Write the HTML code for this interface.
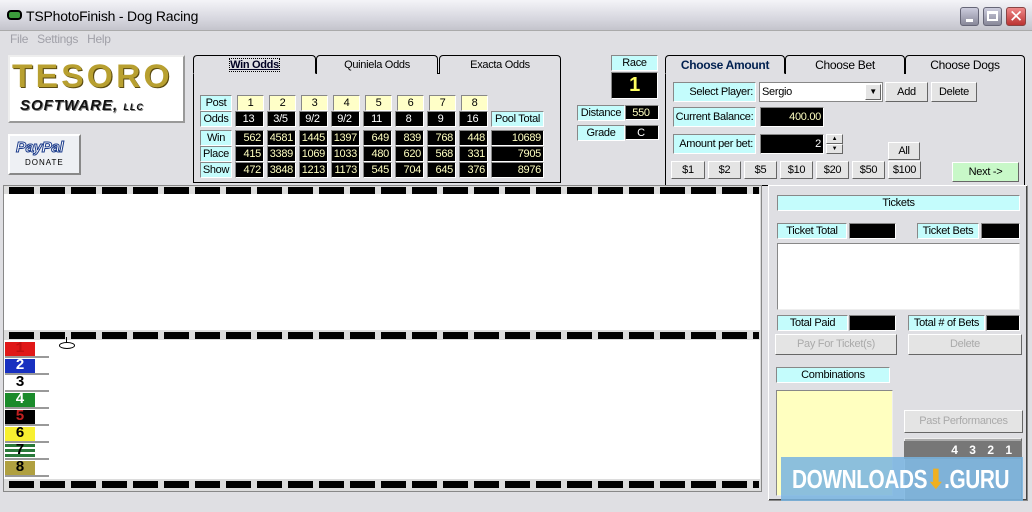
<!DOCTYPE html><html><head><style>
*{margin:0;padding:0;box-sizing:border-box}
body{width:1032px;height:512px;overflow:hidden;background:#dfdfe3;font-family:"Liberation Sans",sans-serif;font-size:11px;letter-spacing:-0.3px;position:relative;white-space:nowrap}
.a{position:absolute}
.lb{position:absolute;background:#c4fcfc;border:1px solid #888;border-right-color:#fff;border-bottom-color:#fff;text-align:center;line-height:14px;overflow:hidden}
.py{background:#ffffc8}
.bk{position:absolute;background:#000;color:#ffffc0;text-align:right;padding-right:2px;line-height:14px;border:1px solid #888;border-right-color:#fff;border-bottom-color:#fff;overflow:hidden}
.bt{position:absolute;background:#e4e4e4;border:1px solid #fff;border-right-color:#666;border-bottom-color:#666;text-align:center;overflow:hidden}
.tab{position:absolute;border:1px solid #000;border-bottom:none;border-radius:4px 4px 0 0;text-align:center;line-height:18px;background:#dfdfe3}
.pan{position:absolute;background:#dfdfe3}
.dash{position:absolute;height:7px;background:repeating-linear-gradient(90deg,#000 0 25px,transparent 25px 31px)}
.lane{position:absolute;left:5px;width:44px;height:16px;border-bottom:2px solid #999;background:#fff}
.lane span{display:block;width:30px;height:14px;font:bold 15px/14px "Liberation Mono",monospace;text-align:center;letter-spacing:0}
</style></head><body>
<div class="a" style="left:0;top:0;width:1032px;height:31px;background:linear-gradient(#f4f4f8,#d8d8e0 60%,#c4c4cc);border-bottom:1px solid #aaa"></div>
<div class="a" style="left:7px;top:10px;width:15px;height:10px;border:2px solid #000;border-radius:4px;background:#3c9c3c"></div>
<div class="a" style="left:26px;top:8px;font-size:14px;letter-spacing:-0.2px">TSPhotoFinish - Dog Racing</div>
<div class="a" style="left:960px;top:7px;width:19px;height:19px;border-radius:3px;background:linear-gradient(#ccd,#889);border:1px solid #667"><div class="a" style="left:5px;top:11px;width:7px;height:3px;background:#fff"></div></div>
<div class="a" style="left:983px;top:7px;width:19px;height:19px;border-radius:3px;background:linear-gradient(#ccd,#889);border:1px solid #667"><div class="a" style="left:3px;top:3px;width:11px;height:10px;border:2px solid #fff;border-top-width:3px"></div></div>
<div class="a" style="left:1006px;top:7px;width:20px;height:19px;border-radius:3px;background:linear-gradient(#e88,#b33);border:1px solid #844;color:#fff;font-size:17px;line-height:17px;text-align:center">✕</div>
<div class="a" style="left:10px;top:32px;color:#a0a0a8;font-size:12px;word-spacing:6px">File Settings Help</div>
<div class="a" style="left:8px;top:55px;width:177px;height:68px;background:#fff;border:2px solid #eee;border-right-color:#999;border-bottom-color:#999"></div>
<div class="a" style="left:12px;top:58px;font:bold 32px/36px 'Liberation Sans';color:#b8a030;letter-spacing:3px;text-shadow:1px 1px #5a4a10;transform:scaleX(1.05);transform-origin:left">TESORO</div>
<div class="a" style="left:20px;top:97px;font:bold italic 15px 'Liberation Sans';color:#111;letter-spacing:1px;text-shadow:1px 1px #888">SOFTWARE, <span style="font-size:9px">LLC</span></div>
<div class="a" style="left:8px;top:134px;width:73px;height:41px;background:#eef0f4;border:2px solid #fff;border-right-color:#888;border-bottom-color:#888"></div>
<div class="a" style="left:16px;top:139px;font:bold italic 15px 'Liberation Sans';color:#fff;-webkit-text-stroke:1px #1c3c8c">PayPal</div>
<div class="a" style="left:25px;top:158px;font-size:8px;letter-spacing:1px">DONATE</div>
<div class="pan" style="left:193px;top:73px;width:368px;height:110px;border:1px solid #000"></div>
<div class="tab" style="left:193px;top:55px;width:123px;height:19px;border-bottom:1px solid #dfdfe3;font-weight:bold;color:#002"><span style="border:1px dotted #000;text-decoration:underline">Win Odds</span></div>
<div class="tab" style="left:316px;top:55px;width:122px;height:19px">Quiniela Odds</div>
<div class="tab" style="left:439px;top:55px;width:122px;height:19px">Exacta Odds</div>
<div class="lb" style="left:200px;top:95px;width:32px;height:16px">Post</div>
<div class="lb" style="left:200px;top:111px;width:32px;height:16px">Odds</div>
<div class="lb" style="left:200px;top:130px;width:32px;height:16px">Win</div>
<div class="lb" style="left:200px;top:146px;width:32px;height:16px">Place</div>
<div class="lb" style="left:200px;top:162px;width:32px;height:16px">Show</div>
<div class="lb" style="left:491px;top:111px;width:53px;height:16px">Pool Total</div>
<div class="lb py" style="left:237px;top:95px;width:27px;height:16px">1</div>
<div class="lb py" style="left:269px;top:95px;width:27px;height:16px">2</div>
<div class="lb py" style="left:301px;top:95px;width:27px;height:16px">3</div>
<div class="lb py" style="left:333px;top:95px;width:27px;height:16px">4</div>
<div class="lb py" style="left:365px;top:95px;width:27px;height:16px">5</div>
<div class="lb py" style="left:397px;top:95px;width:27px;height:16px">6</div>
<div class="lb py" style="left:429px;top:95px;width:27px;height:16px">7</div>
<div class="lb py" style="left:461px;top:95px;width:27px;height:16px">8</div>
<div class="bk" style="left:235px;top:111px;width:29px;height:16px;text-align:center;color:#fff">13</div>
<div class="bk" style="left:267px;top:111px;width:29px;height:16px;text-align:center;color:#fff">3/5</div>
<div class="bk" style="left:299px;top:111px;width:29px;height:16px;text-align:center;color:#fff">9/2</div>
<div class="bk" style="left:331px;top:111px;width:29px;height:16px;text-align:center;color:#fff">9/2</div>
<div class="bk" style="left:363px;top:111px;width:29px;height:16px;text-align:center;color:#fff">11</div>
<div class="bk" style="left:395px;top:111px;width:29px;height:16px;text-align:center;color:#fff">8</div>
<div class="bk" style="left:427px;top:111px;width:29px;height:16px;text-align:center;color:#fff">9</div>
<div class="bk" style="left:459px;top:111px;width:29px;height:16px;text-align:center;color:#fff">16</div>
<div class="bk" style="left:235px;top:130px;width:29px;height:16px">562</div><div class="bk" style="left:267px;top:130px;width:29px;height:16px">4581</div><div class="bk" style="left:299px;top:130px;width:29px;height:16px">1445</div><div class="bk" style="left:331px;top:130px;width:29px;height:16px">1397</div><div class="bk" style="left:363px;top:130px;width:29px;height:16px">649</div><div class="bk" style="left:395px;top:130px;width:29px;height:16px">839</div><div class="bk" style="left:427px;top:130px;width:29px;height:16px">768</div><div class="bk" style="left:459px;top:130px;width:29px;height:16px">448</div><div class="bk" style="left:491px;top:130px;width:53px;height:16px">10689</div>
<div class="bk" style="left:235px;top:146px;width:29px;height:16px">415</div><div class="bk" style="left:267px;top:146px;width:29px;height:16px">3389</div><div class="bk" style="left:299px;top:146px;width:29px;height:16px">1069</div><div class="bk" style="left:331px;top:146px;width:29px;height:16px">1033</div><div class="bk" style="left:363px;top:146px;width:29px;height:16px">480</div><div class="bk" style="left:395px;top:146px;width:29px;height:16px">620</div><div class="bk" style="left:427px;top:146px;width:29px;height:16px">568</div><div class="bk" style="left:459px;top:146px;width:29px;height:16px">331</div><div class="bk" style="left:491px;top:146px;width:53px;height:16px">7905</div>
<div class="bk" style="left:235px;top:162px;width:29px;height:16px">472</div><div class="bk" style="left:267px;top:162px;width:29px;height:16px">3848</div><div class="bk" style="left:299px;top:162px;width:29px;height:16px">1213</div><div class="bk" style="left:331px;top:162px;width:29px;height:16px">1173</div><div class="bk" style="left:363px;top:162px;width:29px;height:16px">545</div><div class="bk" style="left:395px;top:162px;width:29px;height:16px">704</div><div class="bk" style="left:427px;top:162px;width:29px;height:16px">645</div><div class="bk" style="left:459px;top:162px;width:29px;height:16px">376</div><div class="bk" style="left:491px;top:162px;width:53px;height:16px">8976</div>
<div class="lb" style="left:611px;top:55px;width:47px;height:16px">Race</div>
<div class="bk" style="left:611px;top:72px;width:47px;height:27px;text-align:center;padding:0;font:bold 20px/25px 'Liberation Sans';color:#ffff60">1</div>
<div class="lb" style="left:577px;top:105px;width:48px;height:16px">Distance</div>
<div class="bk" style="left:625px;top:105px;width:34px;height:15px;text-align:center">550</div>
<div class="lb" style="left:577px;top:125px;width:48px;height:16px">Grade</div>
<div class="bk" style="left:625px;top:125px;width:34px;height:15px;text-align:center;color:#fff">C</div>
<div class="pan" style="left:665px;top:73px;width:360px;height:113px;border:1px solid #000"></div>
<div class="tab" style="left:665px;top:55px;width:120px;height:19px;border-bottom:1px solid #dfdfe3;font-weight:bold;color:#002050;font-size:12px">Choose Amount</div>
<div class="tab" style="left:785px;top:55px;width:120px;height:19px;font-size:12px">Choose Bet</div>
<div class="tab" style="left:905px;top:55px;width:120px;height:19px;font-size:12px">Choose Dogs</div>
<div class="lb" style="left:673px;top:82px;width:83px;height:20px;line-height:18px;text-align:right;padding-right:2px">Select Player:</div>
<div class="a" style="left:759px;top:82px;width:124px;height:20px;background:#fff;border:1px solid #888;padding-left:2px;line-height:18px">Sergio</div>
<div class="bt" style="left:865px;top:84px;width:16px;height:16px;font-size:8px;line-height:14px">▼</div>
<div class="bt" style="left:885px;top:82px;width:43px;height:20px;line-height:18px">Add</div>
<div class="bt" style="left:931px;top:82px;width:46px;height:20px;line-height:18px">Delete</div>
<div class="lb" style="left:673px;top:107px;width:83px;height:20px;line-height:18px">Current Balance:</div>
<div class="bk" style="left:760px;top:107px;width:64px;height:20px;line-height:18px">400.00</div>
<div class="lb" style="left:673px;top:134px;width:83px;height:20px;line-height:18px;text-align:right;padding-right:2px">Amount per bet:</div>
<div class="bk" style="left:760px;top:134px;width:64px;height:20px;line-height:18px;color:#fff">2</div>
<div class="bt" style="left:826px;top:134px;width:17px;height:10px;font-size:6px;line-height:8px">▲</div>
<div class="bt" style="left:826px;top:144px;width:17px;height:10px;font-size:6px;line-height:8px">▼</div>
<div class="bt" style="left:888px;top:142px;width:32px;height:18px;line-height:16px">All</div>
<div class="bt" style="left:671px;top:161px;width:34px;height:18px;line-height:16px">$1</div>
<div class="bt" style="left:708px;top:161px;width:33px;height:18px;line-height:16px">$2</div>
<div class="bt" style="left:744px;top:161px;width:33px;height:18px;line-height:16px">$5</div>
<div class="bt" style="left:780px;top:161px;width:33px;height:18px;line-height:16px">$10</div>
<div class="bt" style="left:816px;top:161px;width:33px;height:18px;line-height:16px">$20</div>
<div class="bt" style="left:852px;top:161px;width:33px;height:18px;line-height:16px">$50</div>
<div class="bt" style="left:888px;top:161px;width:33px;height:18px;line-height:16px">$100</div>
<div class="bt" style="left:952px;top:162px;width:67px;height:20px;line-height:18px;background:#c8f8c8">Next -&gt;</div>
<div class="a" style="left:3px;top:185px;width:759px;height:307px;border:1px solid #888;background:#dcdcdc"></div>
<div class="a" style="left:4px;top:194px;width:756px;height:136px;background:#fff"></div>
<div class="a" style="left:4px;top:340px;width:756px;height:139px;background:#fff"></div>
<div class="dash" style="left:9px;top:187px;width:750px"></div>
<div class="dash" style="left:9px;top:332px;width:750px"></div>
<div class="dash" style="left:9px;top:481px;width:750px"></div>
<div class="lane" style="top:342px"><span style="background:#e01818;color:#c01010">1</span></div>
<div class="lane" style="top:359px"><span style="background:#1830c0;color:#fff">2</span></div>
<div class="lane" style="top:376px"><span style="background:#fff;color:#000">3</span></div>
<div class="lane" style="top:393px"><span style="background:#1a8a2a;color:#fff">4</span></div>
<div class="lane" style="top:410px"><span style="background:#000;color:#c02020">5</span></div>
<div class="lane" style="top:427px"><span style="background:#f8f030;color:#000">6</span></div>
<div class="lane" style="top:444px"><span style="background:repeating-linear-gradient(#2a7a3a 0 3px,#fff 3px 5px);color:#000">7</span></div>
<div class="lane" style="top:461px"><span style="background:#b0a040;color:#000">8</span></div>
<div class="a" style="left:59px;top:342px;width:16px;height:7px;border:1px solid #000;border-radius:50%"></div>
<div class="a" style="left:66px;top:337px;width:1px;height:6px;background:#000"></div>
<div class="a" style="left:768px;top:185px;width:260px;height:316px;border:1px solid #888;border-left-color:#fff;border-top-color:#fff;box-shadow:inset -1px -1px #444"></div>
<div class="lb" style="left:777px;top:195px;width:243px;height:16px">Tickets</div>
<div class="lb" style="left:777px;top:223px;width:70px;height:16px">Ticket Total</div>
<div class="bk" style="left:849px;top:223px;width:47px;height:16px"></div>
<div class="lb" style="left:917px;top:223px;width:62px;height:16px">Ticket Bets</div>
<div class="bk" style="left:981px;top:223px;width:39px;height:16px"></div>
<div class="a" style="left:777px;top:243px;width:243px;height:67px;background:#fff;border:1px solid #888;border-right-color:#eee;border-bottom-color:#eee"></div>
<div class="lb" style="left:777px;top:315px;width:71px;height:16px">Total Paid</div>
<div class="bk" style="left:849px;top:315px;width:47px;height:16px"></div>
<div class="lb" style="left:908px;top:315px;width:77px;height:16px">Total # of Bets</div>
<div class="bk" style="left:986px;top:315px;width:34px;height:16px"></div>
<div class="bt" style="left:775px;top:334px;width:122px;height:21px;line-height:19px;color:#aaa">Pay For Ticket(s)</div>
<div class="bt" style="left:908px;top:334px;width:114px;height:21px;line-height:19px;color:#aaa">Delete</div>
<div class="lb" style="left:776px;top:367px;width:114px;height:16px">Combinations</div>
<div class="a" style="left:776px;top:390px;width:117px;height:106px;background:#ffffc0;border:1px solid #888;border-right-color:#eee;border-bottom-color:#eee"></div>
<div class="bt" style="left:904px;top:410px;width:119px;height:23px;line-height:21px;color:#aaa">Past Performances</div>
<div class="a" style="left:904px;top:438px;width:118px;height:62px;background:#aaa;border:1px solid #eee;border-right-color:#666;border-bottom-color:#666"></div>
<div class="a" style="left:904px;top:441px;width:118px;height:18px;background:#777;color:#fff;font:bold 12px/18px 'Liberation Sans';text-align:right;padding-right:6px;letter-spacing:4px">4 3 2 1</div>
<div class="a" style="left:781px;top:457px;width:242px;height:44px;background:rgba(120,180,225,.85);overflow:hidden"><div class="a" style="left:11px;top:5px;color:#fff;font:bold 26px/34px 'Liberation Sans';letter-spacing:-0.5px;transform:scaleX(0.8);transform-origin:left">DOWNLOADS<span style="color:#f0b020">⬇</span>.GURU</div></div>
</body></html>
